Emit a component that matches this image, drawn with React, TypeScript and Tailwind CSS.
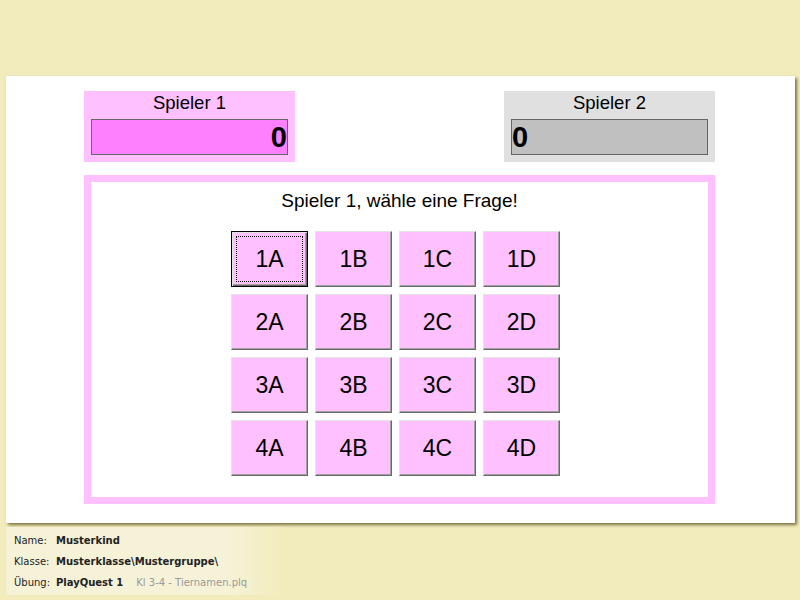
import React from "react";

const rows = ["1", "2", "3", "4"];
const cols = ["A", "B", "C", "D"];

function QButton({ label, focused }: { label: string; focused?: boolean }) {
  return (
    <div
      className={
        "relative w-[77px] h-[56px] bg-[#ffc0ff] flex items-center justify-center text-[23px] text-black " +
        (focused
          ? "border border-black shadow-[inset_1px_1px_0_#e3e3e3,inset_-1px_-1px_0_#696969,inset_-2px_-2px_0_#a0a0a0]"
          : "border border-t-[#e3e3e3] border-l-[#e3e3e3] border-b-[#696969] border-r-[#696969] shadow-[inset_-1px_-1px_0_#a0a0a0]")
      }
    >
      {focused && (
        <span className="absolute left-[4px] top-[4px] right-[4px] bottom-[4px] border border-dotted border-black" />
      )}
      <span className="leading-none">{label}</span>
    </div>
  );
}

export default function App() {
  return (
    <div
      className="w-[800px] h-[600px] bg-[#f2ecbd] relative overflow-hidden"
      style={{ fontFamily: '"Liberation Sans", Arial, sans-serif' }}
    >
      <div className="h-[76px]" />
      <div className="ml-[6px] w-[789px] h-[447px] bg-white shadow-[2px_2px_3px_rgba(70,60,10,0.7)] pt-[15px] pl-[78px] pr-[80px] flex flex-col">
        <div className="flex justify-between">
          <div className="w-[211px] h-[71px] bg-[#ffc0ff] flex flex-col px-[7px] pb-[7px]">
            <div className="h-[28px] flex items-center justify-center text-[18.5px] text-black pb-[4px]">Spieler 1</div>
            <div className="flex-1 bg-[#ff80ff] border border-[#666666] flex items-center justify-end text-[29px] font-bold text-black leading-none">
              0
            </div>
          </div>
          <div className="w-[211px] h-[71px] bg-[#e0e0e0] flex flex-col px-[7px] pb-[7px]">
            <div className="h-[28px] flex items-center justify-center text-[18.5px] text-black pb-[4px]">Spieler 2</div>
            <div className="flex-1 bg-[#c0c0c0] border border-[#666666] flex items-center justify-start text-[29px] font-bold text-black leading-none">
              0
            </div>
          </div>
        </div>
        <div className="mt-[13px] w-[631px] h-[329px] border-[7px] border-[#ffc0ff] flex flex-col">
          <div className="h-[38px] flex items-center justify-center text-[19px] text-black">
            Spieler 1, wähle eine Frage!
          </div>
          <div className="mt-[11px] ml-[140px] grid grid-cols-[repeat(4,77px)] gap-x-[7px] gap-y-[7px]">
            {rows.map((r) =>
              cols.map((c) => (
                <QButton key={r + c} label={r + c} focused={r === "1" && c === "A"} />
              ))
            )}
          </div>
        </div>
      </div>
      <div
        className="ml-[6px] mt-[4px] w-[276px] h-[68px] bg-[linear-gradient(to_right,#f6f2d8_0%,#f6f2d8_80%,#f2ecbd_100%)] pl-[8px] pt-[3px] text-[#222] flex flex-col"
        style={{ fontFamily: '"DejaVu Sans", Tahoma, sans-serif' }}
      >
        <div className="h-[21px] flex items-center">
          <span className="w-[42px] text-[10px]">Name:</span>
          <span className="font-bold text-[10px]">Musterkind</span>
        </div>
        <div className="h-[21px] flex items-center">
          <span className="w-[42px] text-[10px]">Klasse:</span>
          <span className="font-bold text-[10px]">Musterklasse\Mustergruppe\</span>
        </div>
        <div className="h-[21px] flex items-center">
          <span className="w-[42px] text-[10px]">Übung:</span>
          <span className="font-bold text-[10px]">PlayQuest 1</span>
          <span className="ml-[13px] text-[10px] text-[#999999]">Kl 3-4 - Tiernamen.plq</span>
        </div>
      </div>
    </div>
  );
}
